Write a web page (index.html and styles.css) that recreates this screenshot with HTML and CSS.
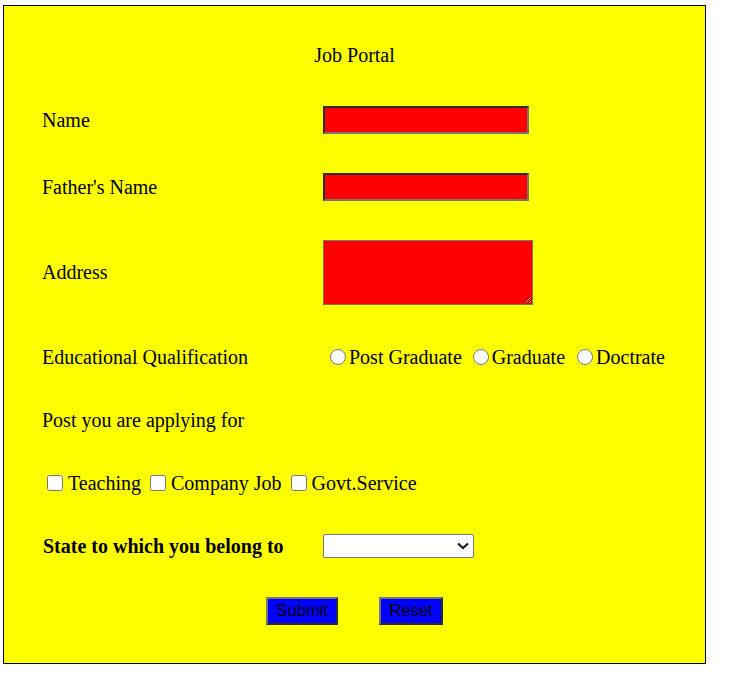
FILE: index.html
```html
<!DOCTYPE html>
<html>
<head>
<meta charset="utf-8">
<title>Job Portal</title>
<link rel="stylesheet" href="styles.css">
</head>
<body>
<form class="portal">
  <div class="row r-title"><span class="title">Job Portal</span></div>
  <div class="row r-name">
    <label class="lbl">Name</label>
    <input class="txt" type="text">
  </div>
  <div class="row r-father">
    <label class="lbl">Father's Name</label>
    <input class="txt" type="text">
  </div>
  <div class="row r-address">
    <label class="lbl">Address</label>
    <textarea class="area"></textarea>
  </div>
  <div class="row r-edu">
    <label class="lbl">Educational Qualification</label>
    <div class="opts">
      <label class="opt"><input class="radio" type="radio" name="q">Post Graduate</label>
      <label class="opt"><input class="radio" type="radio" name="q">Graduate</label>
      <label class="opt"><input class="radio" type="radio" name="q">Doctrate</label>
    </div>
  </div>
  <div class="row r-post">
    <label class="lbl">Post you are applying for</label>
  </div>
  <div class="row r-checks">
    <label class="chk"><input class="box" type="checkbox">Teaching</label>
    <label class="chk"><input class="box" type="checkbox">Company Job</label>
    <label class="chk"><input class="box" type="checkbox">Govt.Service</label>
  </div>
  <div class="row r-state">
    <label class="lbl bold">State to which you belong to</label>
    <div class="sel-wrap">
      <select class="sel"><option></option></select>
      <svg class="chev" width="12" height="8" viewBox="0 0 12 8"><path d="M1 1.5 L6 6 L11 1.5" fill="none" stroke="#1a1a1a" stroke-width="2.2"/></svg>
    </div>
  </div>
  <div class="row r-btns">
    <button class="btn" type="submit">Submit</button>
    <button class="btn" type="reset">Reset</button>
  </div>
</form>
</body>
</html>
```
FILE: styles.css
```css
html, body {
  background: #ffffff;
}
body {
  margin: 5px 0 0 3px;
  font-family: "Liberation Serif", "Times New Roman", serif;
  font-size: 20px;
  color: #000;
}
.portal {
  box-sizing: border-box;
  width: 703px;
  height: 659px;
  border: 1px solid #000;
  background: #ffff00;
  padding: 16px 0 0 38px;
  display: flex;
  flex-direction: column;
}
.row {
  display: grid;
  grid-template-columns: 281px auto;
  align-items: center;
}
.r-title { height: 66px; display: flex; justify-content: center; padding-right: 38px; }
.r-name { height: 65px; }
.r-father { height: 68px; }
.r-address { height: 102px; }
.r-edu { height: 68px; }
.r-post { height: 58px; }
.r-checks { height: 68px; display: flex; }
.r-state { height: 58px; }
.r-btns { height: 72px; display: flex; justify-content: center; gap: 41px; padding-right: 38px; }

.title { line-height: 23px; }
.lbl { line-height: 23px; }
.bold { font-weight: bold; padding-left: 1px; }

.txt {
  box-sizing: border-box;
  width: 206px;
  height: 28px;
  margin: 0 0 1px 0;
  background: #ff0000;
  border-width: 2px;
  border-style: solid;
  border-color: #2b2b2b #767676 #767676 #2b2b2b;
  padding: 1px 2px;
}
.area {
  box-sizing: border-box;
  width: 210px;
  height: 65px;
  margin: 0;
  background: #ff0000;
  border: 1px solid #767676;
  padding: 2px;
  display: block;
}
.opts { display: flex; align-items: center; }
.opt { display: inline-flex; align-items: center; margin-right: 4px; }
.opt:nth-child(2) { margin-right: 5px; }
.radio {
  width: 16px;
  height: 16px;
  margin: 0 3px 0 7px;
}
.chk { display: inline-flex; align-items: center; margin-right: 4px; }
.box {
  width: 16px;
  height: 16px;
  margin: 0 5px 0 5px;
}
.sel-wrap {
  position: relative;
  width: 151px;
  height: 24px;
}
.sel {
  box-sizing: border-box;
  width: 151px;
  height: 24px;
  margin: 0;
  background: #fff;
  border: 1px solid #767676;
  border-radius: 2px;
  font-size: 16px;
  appearance: none;
  -webkit-appearance: none;
  display: block;
}
.chev {
  position: absolute;
  right: 5px;
  top: 8px;
  pointer-events: none;
}
.btn {
  box-sizing: border-box;
  height: 28px;
  margin: 0;
  padding: 1px 8px;
  background: #0000ff;
  color: #000;
  font-family: "Liberation Sans", Arial, sans-serif;
  font-size: 16.67px;
  border-width: 2px;
  border-style: solid;
  border-color: #767676 #2b2b2b #2b2b2b #767676;
}
```
